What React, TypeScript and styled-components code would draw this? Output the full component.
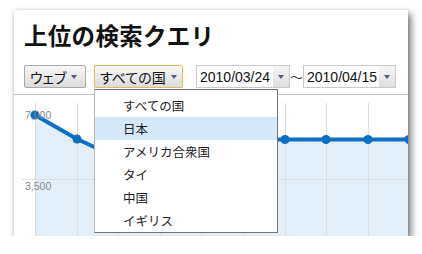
import React from "react";
import styled, { createGlobalStyle } from "styled-components";

const Global = createGlobalStyle`
  html, body { margin: 0; padding: 0; background: #ffffff; }
  body { font-family: "Noto Sans CJK JP", "Liberation Sans", sans-serif; }
`;

const Card = styled.div`
  position: relative;
  width: 394px;
  height: 226px;
  margin: 10px 0 0 14px;
  background: #ffffff;
  overflow: hidden;
  box-shadow: 3px 4px 7px rgba(0, 0, 0, 0.55), 0 0 3px rgba(0, 0, 0, 0.12);
`;

const Header = styled.div`
  padding: 12px 10px 0 10px;
  height: 72px;
`;

const Title = styled.h1`
  margin: 0;
  font-family: "Noto Sans CJK JP", sans-serif;
  font-weight: 700;
  font-size: 23.5px;
  line-height: 27px;
  letter-spacing: 0.3px;
  color: #111;
`;

const Controls = styled.div`
  display: flex;
  align-items: center;
  margin-top: 16px;
  height: 23px;
`;

const Caret = styled.span`
  display: inline-block;
  width: 0;
  height: 0;
  border-left: 3.5px solid transparent;
  border-right: 3.5px solid transparent;
  border-top: 4px solid #4f5f78;
  margin-left: 5px;
`;

const MenuButton = styled.div<{ $w: number; $active?: boolean }>`
  box-sizing: border-box;
  width: ${(p) => p.$w}px;
  height: 23px;
  display: flex;
  align-items: center;
  padding-left: 5px;
  margin-right: 8px;
  border: 1px solid ${(p) => (p.$active ? "#e2b862" : "#a9a9a9")};
  border-radius: 2px;
  background: linear-gradient(#f7f7f7, #dcdcdc);
  box-shadow: ${(p) => (p.$active ? "0 0 1px #f0d080" : "none")};
  font-family: "Noto Sans CJK JP", sans-serif;
  font-size: 14px;
  font-feature-settings: "palt";
  color: #111;
  white-space: nowrap;
`;

const DateSelect = styled.div<{ $w: number }>`
  box-sizing: border-box;
  width: ${(p) => p.$w}px;
  height: 23px;
  display: flex;
  align-items: stretch;
  border: 1px solid #c9c9c9;
  background: #fff;
`;

const DateText = styled.span`
  flex: 1;
  display: flex;
  align-items: center;
  padding-left: 3px;
  font-family: "Liberation Sans", Arial, sans-serif;
  font-size: 14px;
  color: #111;
`;

const DateArrow = styled.span`
  width: 16px;
  display: flex;
  align-items: center;
  justify-content: center;
  background: linear-gradient(#f6f6f6, #dedede);
  & > span { margin-left: 0; }
`;

const Tilde = styled.span`
  width: 13px;
  text-align: center;
  font-family: "Noto Sans CJK JP", sans-serif;
  font-size: 13px;
  color: #333;
`;

const Gap = styled.span<{ $w: number }>`
  width: ${(p) => p.$w}px;
`;

const Chart = styled.svg`
  display: block;
  border-top: 1px solid #c8c8c8;
  margin-top: 0;
`;

const Menu = styled.div`
  position: absolute;
  left: 80px;
  top: 79px;
  width: 184px;
  box-sizing: border-box;
  background: #fff;
  border: 1px solid #777;
  border-left-color: #b8b8b8;
  padding-top: 4px;
`;

const MenuItem = styled.div<{ $hl?: boolean }>`
  height: 23px;
  line-height: 23px;
  padding-left: 28px;
  background: ${(p) => (p.$hl ? "#d6e8f7" : "transparent")};
  font-family: "Noto Sans CJK JP", sans-serif;
  font-size: 12.5px;
  color: #222;
`;

const xs = [21, 63, 104, 146, 187, 229, 271, 312, 354, 395];
const ys = [20, 44, 63, 62, 52, 45, 44.5, 44.5, 44.5, 44.5];

export default function App() {
  const pts = xs.map((x, i) => `${x},${ys[i]}`).join(" L");
  const fill = `M${pts} L400,44.5 L400,142 L21,142 Z`;
  const line = `M${pts} L400,44.5`;
  return (
    <>
      <Global />
      <Card>
        <Header>
          <Title>上位の検索クエリ</Title>
          <Controls>
            <MenuButton $w={62}>
              ウェブ<Caret />
            </MenuButton>
            <MenuButton $w={89} $active>
              すべての国<Caret />
            </MenuButton>
            <Gap $w={5} />
            <DateSelect $w={94}>
              <DateText>2010/03/24</DateText>
              <DateArrow>
                <Caret />
              </DateArrow>
            </DateSelect>
            <Tilde>～</Tilde>
            <DateSelect $w={93}>
              <DateText>2010/04/15</DateText>
              <DateArrow>
                <Caret />
              </DateArrow>
            </DateSelect>
          </Controls>
        </Header>
        <Chart width={394} height={142} viewBox="0 0 394 142">
          <path d={fill} fill="#e2eff9" />
          {xs.map((x) => (
            <line key={x} x1={x + 0.5} y1={8} x2={x + 0.5} y2={142} stroke="#dcdcdc" strokeWidth={1} />
          ))}
          <line x1={8} y1={84.5} x2={394} y2={84.5} stroke="#dedede" strokeWidth={1} />
          <path d={line} fill="none" stroke="#0b6fc3" strokeWidth={4} strokeLinejoin="round" />
          {xs.map((x, i) => (
            <circle key={x} cx={x} cy={ys[i]} r={4.5} fill="#0b6fc3" />
          ))}
          <text x={11} y={24} fontFamily="Liberation Sans, Arial, sans-serif" fontSize={10.5} fill="#8a8a8a">
            7,000
          </text>
          <text x={11} y={95} fontFamily="Liberation Sans, Arial, sans-serif" fontSize={10.5} fill="#8a8a8a">
            3,500
          </text>
        </Chart>
        <Menu>
          <MenuItem>すべての国</MenuItem>
          <MenuItem $hl>日本</MenuItem>
          <MenuItem>アメリカ合衆国</MenuItem>
          <MenuItem>タイ</MenuItem>
          <MenuItem>中国</MenuItem>
          <MenuItem>イギリス</MenuItem>
        </Menu>
      </Card>
    </>
  );
}
